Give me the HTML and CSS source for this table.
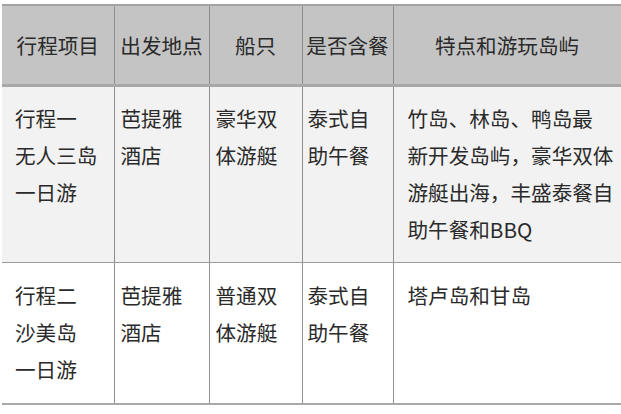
FILE: index.html
```html
<!DOCTYPE html>
<html lang="zh-CN">
<head>
<meta charset="utf-8">
<title>行程</title>
<link rel="stylesheet" href="styles.css">
</head>
<body>
<div class="wrap">
<table class="trip">
<colgroup>
<col class="c1"><col class="c2"><col class="c3"><col class="c4"><col class="c5">
</colgroup>
<thead>
<tr>
<th>行程项目</th><th>出发地点</th><th>船只</th><th>是否含餐</th><th>特点和游玩岛屿</th>
</tr>
</thead>
<tbody>
<tr class="odd">
<td class="p1">行程一<br>无人三岛<br>一日游</td>
<td class="p2">芭提雅<br>酒店</td>
<td class="p2">豪华双<br>体游艇</td>
<td class="p4">泰式自<br>助午餐</td>
<td class="p5">竹岛、林岛、鸭岛最<br>新开发岛屿，豪华双体<br>游艇出海，丰盛泰餐自<br>助午餐和BBQ</td>
</tr>
<tr class="even">
<td class="p1">行程二<br>沙美岛<br>一日游</td>
<td class="p2">芭提雅<br>酒店</td>
<td class="p2">普通双<br>体游艇</td>
<td class="p4">泰式自<br>助午餐</td>
<td class="p5">塔卢岛和甘岛</td>
</tr>
</tbody>
</table>
</div>
</body>
</html>
```

FILE: styles.css
```css
html, body {
  margin: 0;
  padding: 0;
  background: #ffffff;
}
.wrap {
  padding: 4px 0 0 2px;
}
.trip {
  border-collapse: collapse;
  table-layout: fixed;
  width: 619px;
  font-family: "Noto Sans CJK SC", "Noto Sans", sans-serif;
  font-size: 20.6px;
  line-height: 37px;
  color: #2a2a2a;
}
.c1 { width: 112px; }
.c2 { width: 95px; }
.c3 { width: 93px; }
.c4 { width: 91px; }
.c5 { width: 228px; }
.trip th {
  background: #c4c4c4;
  font-weight: 400;
  text-align: center;
  padding: 21px 0 20px 0;
  border-top: 2px solid #a3a3a3;
  border-left: 1px solid #8e8e8e;
  border-right: 1px solid #8e8e8e;
  border-bottom: 3px solid #a8a8a8;
  white-space: nowrap;
}
.trip th:first-child { border-left: none; }
.trip td {
  vertical-align: top;
  text-align: left;
  padding: 13px 0 14px 0;
  border-left: 1px solid #8e8e8e;
  border-right: 1px solid #8e8e8e;
  border-bottom: 1px solid #9a9a9a;
  white-space: nowrap;
}
.trip td:first-child { border-left: none; }
.trip tr.odd td { background: #f2f2f2; }
.trip tr.even td {
  background: #ffffff;
  border-bottom: 2px solid #a8a8a8;
  padding-top: 14px;
  padding-bottom: 15px;
}
.p1 { padding-left: 13px !important; }
.p2 { padding-left: 6px !important; }
.p4 { padding-left: 5px !important; }
.p5 { padding-left: 14px !important; }
```
